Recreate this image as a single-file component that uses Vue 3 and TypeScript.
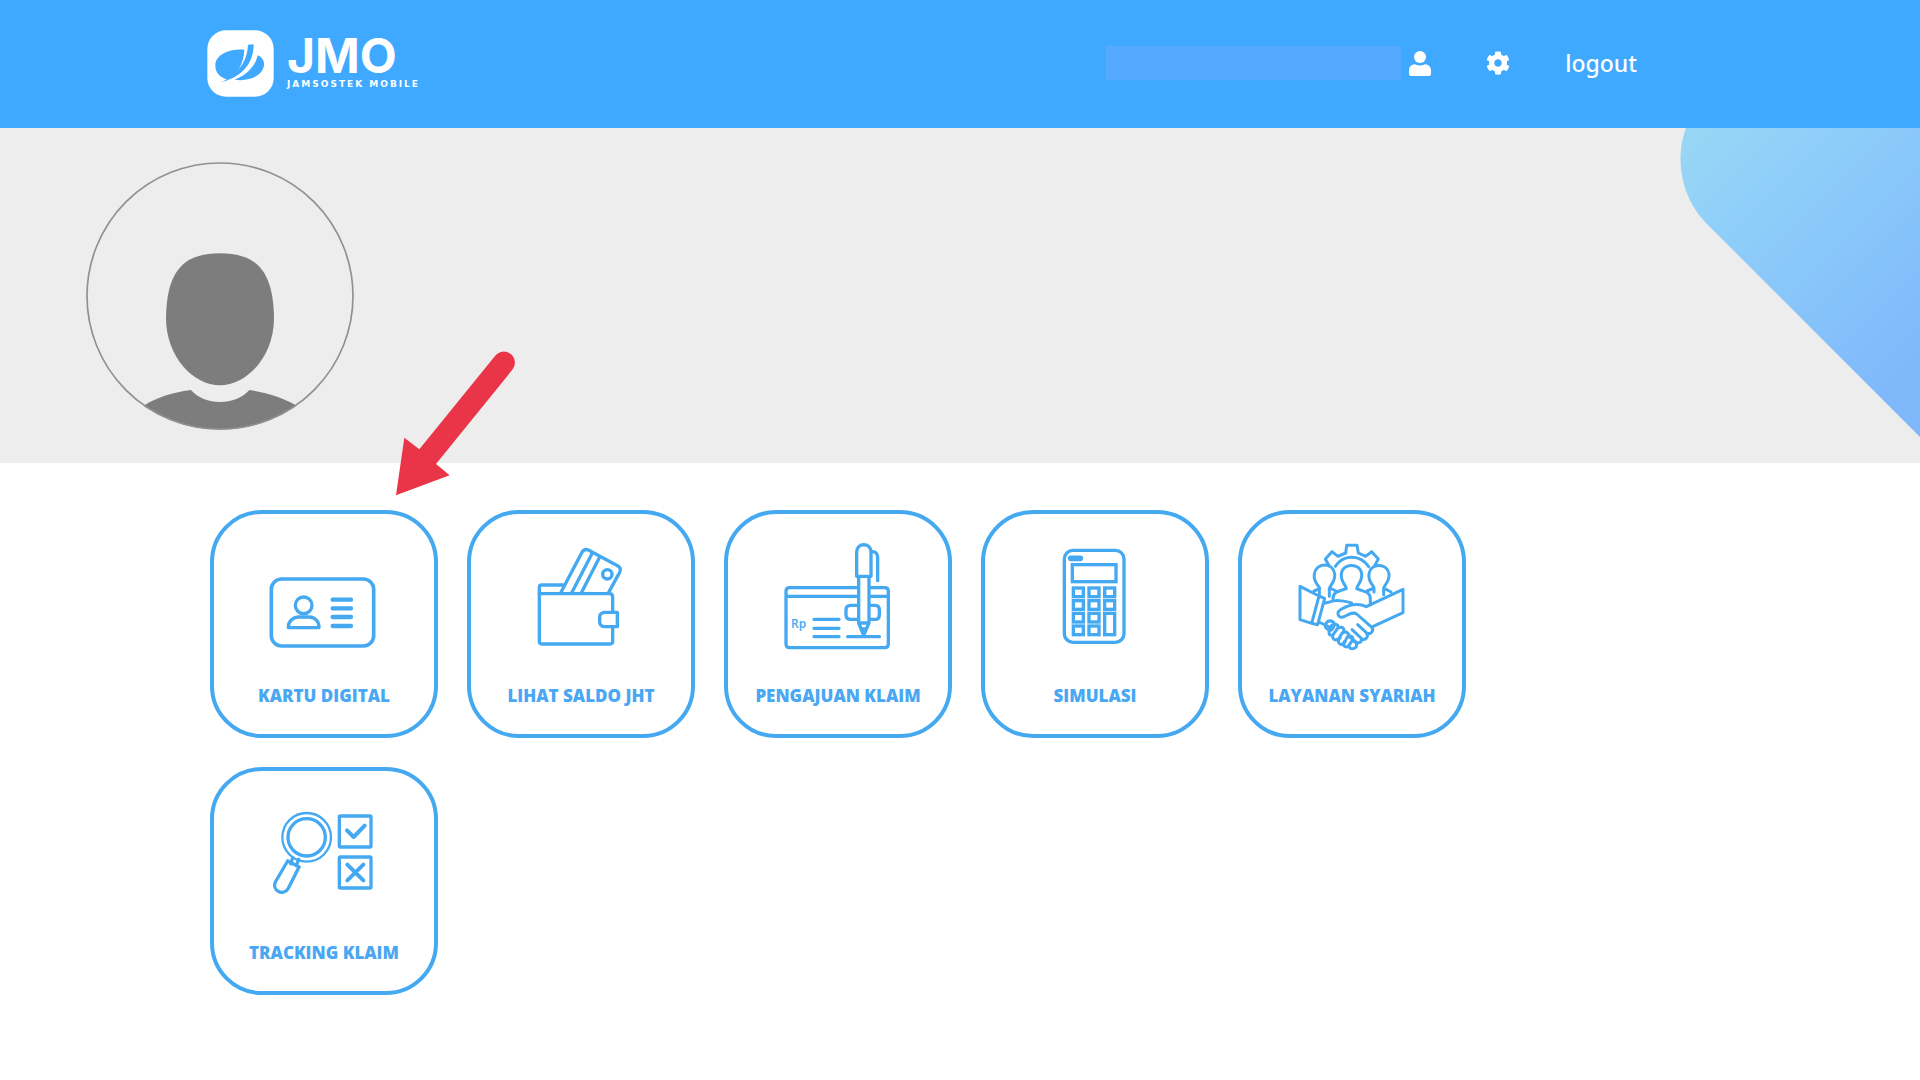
<script setup lang="ts">
interface MenuItem {
  id: string
  label: string
  viewBox: string
}

const menu: MenuItem[] = [
  { id: 'kartu', label: 'KARTU DIGITAL', viewBox: '193 121 360 360' },
  { id: 'saldo', label: 'LIHAT SALDO JHT', viewBox: '184 121 360 360' },
  { id: 'klaim', label: 'PENGAJUAN KLAIM', viewBox: '190 122 360 360' },
  { id: 'simulasi', label: 'SIMULASI', viewBox: '196 122 360 360' },
  { id: 'syariah', label: 'LAYANAN SYARIAH', viewBox: '187 120 360 360' },
  { id: 'tracking', label: 'TRACKING KLAIM', viewBox: '193 111 360 360' },
]

const keyColumns = [311, 358, 405]
const keyRows = [266, 304, 342, 380]
const calculatorKeys = keyRows.flatMap((y, row) =>
  keyColumns.filter((_, col) => row < 2 || col < 2).map((x) => ({ x, y })),
)
</script>

<template>
  <div class="page">
    <header class="topbar">
      <a class="brand" href="#" aria-label="JMO Jamsostek Mobile">
        <svg class="brand-mark" viewBox="51 60 201 201" aria-hidden="true">
          <rect x="52" y="61" width="199" height="199" rx="56" fill="#fff" />
          <path d="M163 119C120 116 77 133 76 165C75 187 91 204 113 208C139 196 161 165 163 119Z" fill="#3fa9ff" />
          <path d="M174 104L191 103C191 151 167 197 94 217C143 190 171 159 174 104Z" fill="#3fa9ff" />
          <path d="M203 136C216 142 223 151 222 165C219 196 178 216 134 209C169 196 196 169 203 136Z" fill="#3fa9ff" />
        </svg>
        <span class="brand-text">
          <span class="brand-name">JMO</span>
          <span class="brand-tagline">JAMSOSTEK MOBILE</span>
        </span>
      </a>
      <nav class="account">
        <a class="profile" href="#" aria-label="Profil">
          <span class="profile-name"></span>
          <svg class="user-icon" viewBox="0 0 22 25" aria-hidden="true">
            <circle cx="11" cy="6" r="6" fill="#fff" />
            <path d="M6 13.2C9 14.8 13 14.8 16 13.2C19.500 13.200 22 16 22 19V23Q22 25 20 25H2Q0 25 0 23V19C0 16 2.500 13.200 6 13.200Z" fill="#fff" />
          </svg>
        </a>
        <button class="icon-button" type="button" aria-label="Pengaturan">
          <svg class="gear-icon" viewBox="0 0 512 512" aria-hidden="true">
            <path fill="#fff" d="M487.400 315.700l-42.600-24.600c4.300-23.200 4.300-47 0-70.200l42.600-24.600c4.900-2.800 7.100-8.600 5.500-14-11.100-35.600-30-67.800-54.700-94.600-3.800-4.100-10-5.100-14.800-2.300L380.800 110c-17.900-15.400-38.500-27.300-60.800-35.100V25.800c0-5.600-3.900-10.500-9.400-11.700-36.700-8.200-74.300-7.800-109.200 0-5.500 1.200-9.400 6.100-9.400 11.700V75c-22.200 7.900-42.800 19.800-60.800 35.100L88.700 85.500c-4.900-2.800-11-1.900-14.800 2.300-24.700 26.700-43.600 58.900-54.700 94.600-1.700 5.400.6 11.200 5.500 14L67.300 221c-4.300 23.200-4.300 47 0 70.200l-42.600 24.600c-4.900 2.800-7.100 8.600-5.500 14 11.100 35.600 30 67.800 54.700 94.600 3.800 4.100 10 5.100 14.800 2.300l42.600-24.600c17.900 15.400 38.500 27.300 60.800 35.100v49.200c0 5.600 3.900 10.500 9.400 11.700 36.700 8.200 74.300 7.800 109.200 0 5.500-1.200 9.400-6.100 9.400-11.700v-49.200c22.200-7.900 42.800-19.800 60.800-35.100l42.600 24.600c4.900 2.800 11 1.900 14.800-2.300 24.700-26.700 43.600-58.900 54.700-94.600 1.500-5.500-.7-11.300-5.600-14.100zM256 336c-44.100 0-80-35.900-80-80s35.900-80 80-80 80 35.900 80 80-35.900 80-80 80z" />
          </svg>
        </button>
        <a class="logout" href="#">logout</a>
      </nav>
    </header>

    <section class="hero">
      <svg class="avatar" viewBox="79 66 804 804" role="img" aria-label="Foto profil">
        <defs>
          <clipPath id="avatar-clip"><circle cx="481" cy="468" r="401" /></clipPath>
        </defs>
        <path d="M481 340C585 340 641 386 643 534C643 650 561 736 481 736C401 736 319 650 319 534C321 386 377 340 481 340Z" fill="#7d7d7d" />
        <path clip-path="url(#avatar-clip)" d="M252 797C290 773 335 758 394 750C434 798 528 798 569 750C620 758 670 773 711 797V880H252Z" fill="#7d7d7d" />
        <circle cx="481" cy="468" r="399" fill="none" stroke="#909090" stroke-width="5" />
      </svg>
      <svg class="ornament" viewBox="0 0 240 335" aria-hidden="true">
        <defs>
          <linearGradient id="ornament-fill" gradientUnits="userSpaceOnUse" x1="10" y1="10" x2="240" y2="240">
            <stop offset="0" stop-color="#98d6f5" />
            <stop offset="0.25" stop-color="#90cff9" />
            <stop offset="1" stop-color="#7eb8fb" />
          </linearGradient>
        </defs>
        <path d="M6 0A92 92 0 0 0 28 97L240 309V0Z" fill="url(#ornament-fill)" />
      </svg>
      <svg class="pointer" viewBox="75 60 366 441" aria-hidden="true">
        <path d="M78 496L103 323L148 358L375 78A33 33 0 0 1 428 118L198 402L239 436Z" fill="#ea3447" />
      </svg>
    </section>

    <main class="menu">
      <a v-for="item in menu" :key="item.id" class="card" href="#">
        <svg class="card-icon" :viewBox="item.viewBox" aria-hidden="true">
          <g v-if="item.id === 'kartu'">
            <rect x="215" y="238" width="307" height="201" rx="31" stroke-width="11" />
            <circle cx="312" cy="317" r="25" />
            <path d="M266 384C265 364 281 353 295 352H329C346 353 359 365 358 384Z" />
            <path d="M399 300H454M399 326H454M399 352H454M399 379H454" stroke-width="13" />
          </g>
          <g v-else-if="item.id === 'saldo'">
            <path d="M459 332V292Q459 282 449 282H239V425Q239 433 247 433H451Q459 433 459 425V384" />
            <path d="M239 282V262Q239 256 247 256H311" />
            <path d="M304 278L367 158Q374 146 386 151L475 199Q486 206 480 218L447 278" />
            <path d="M337 278L398 160M366 278L420 172" />
            <circle cx="443" cy="224" r="14" />
            <path d="M473 338V381H433Q420 378 420 366V352Q420 341 433 338Z" />
          </g>
          <g v-else-if="item.id === 'klaim'">
            <path d="M428 265H225Q214 265 214 276V434Q214 445 225 445H510Q521 445 521 434V276Q521 265 510 265H467M214 291H428M467 291H521" />
            <path d="M430 231H426V158C426 129 469 129 469 158V231ZM432 235V371H463V235M432 371L447 408L463 371M442 389H453" />
            <path d="M472 157C484 156 489 164 489 176V244" />
            <path d="M428 318H408Q394 318 394 332V346Q394 360 408 360H428M467 318H482Q494 318 494 332V346Q494 360 482 360H467" />
            <path d="M298 360H373M298 387H373M298 412H373M399 412H494" />
            <text x="229" y="385">Rp</text>
          </g>
          <g v-else-if="item.id === 'simulasi'">
            <rect x="284" y="153" width="179" height="276" rx="26" />
            <path d="M303 177H332" stroke-width="17" />
            <rect x="308" y="196" width="131" height="51" class="sharp" />
            <rect v-for="key in calculatorKeys" :key="`${key.x}-${key.y}`" :x="key.x" :y="key.y" width="30" height="26" class="sharp" />
            <rect x="405" y="342" width="30" height="64" class="sharp" />
          </g>
          <g v-else-if="item.id === 'syariah'" class="fine">
            <path d="M298 197L287 177L307 155L325 169L348 159L351 136H382L386 159L408 169L426 155L446 177L435 197" />
            <path d="M317 199C339 165 390 160 417 200" />
            <path d="M253 273L270 266C267 255 250 246 254 221C259 188 308 185 315 221C318 245 302 254 300 264L319 273M299 264V289" />
            <path d="M269 264V283M310 298C309 276 323 275 350 266C349 255 332 246 335 221C340 188 391 188 396 221C399 245 382 255 381 266C404 276 423 274 422 298V315" />
            <path d="M412 273L433 264C431 254 414 245 418 221C423 188 472 188 478 221C481 245 464 254 462 264L484 276M433 264V276M462 264V284" />
            <path d="M268 288L211 259V359L246 370M268 288L285 295L264 374L246 370ZM280 311L300 306C319 297 342 302 366 309M267 366L294 378" />
            <path d="M429 380L520 338V268L410 320C386 309 361 313 336 327C316 337 326 358 343 350C356 344 370 334 381 342L424 380C436 390 423 407 410 398L384 374M410 398C419 412 405 424 394 414L367 389M394 414C399 425 389 432 379 426L361 412" />
            <path d="M291 386C279 375 295 357 309 365C322 372 307 395 297 391C300 367 335 369 323 386L310 405C292 410 297 388 308 382M323 386C339 376 350 388 337 400L328 415C314 426 302 413 314 399M337 400C352 390 363 402 351 414L344 430C333 440 318 426 332 413M351 414C363 402 374 411 367 423L356 438C346 445 337 436 344 425M367 423C380 421 386 437 376 444C363 451 353 440 361 431" />
          </g>
          <g v-else>
            <circle cx="321" cy="232" r="73" stroke-width="7" />
            <circle cx="321" cy="232" r="56" />
            <path d="M279 293L273 311M297 298L290 317M264 303L298 321" />
            <path d="M264 303L227 366C216 391 250 411 266 385L298 321" />
            <rect x="419" y="168" width="95" height="93" rx="3" />
            <rect x="419" y="291" width="95" height="93" rx="3" />
            <path d="M442 211L462 231L495 197M443 314L491 361M491 314L443 361" stroke-width="12" />
          </g>
        </svg>
        <span class="card-label">{{ item.label }}</span>
      </a>
    </main>
  </div>
</template>

<style>
body {
  margin: 0;
  background: #fff;
}
</style>

<style scoped>
.page {
  min-height: 100vh;
  background: #fff;
  font-family: 'Open Sans', 'Noto Sans', sans-serif;
}

.topbar {
  display: flex;
  align-items: center;
  justify-content: space-between;
  box-sizing: border-box;
  min-height: 128px;
  padding: 0 283px 2px 207px;
  background: #3fa9ff;
}

.brand {
  display: flex;
  align-items: center;
  gap: 13px;
  color: #fff;
  text-decoration: none;
}

.brand-mark {
  width: 67px;
  height: 67px;
}

.brand-text {
  display: flex;
  flex-direction: column;
  gap: 2px;
}

.brand-name {
  font-family: Inter, sans-serif;
  font-size: 48px;
  font-weight: 700;
  line-height: 40px;
}

.brand-tagline {
  font-family: 'DejaVu Sans', sans-serif;
  font-size: 9px;
  font-weight: 700;
  line-height: 12px;
  letter-spacing: 2px;
}

.account {
  display: flex;
  align-items: center;
  gap: 55px;
}

.profile {
  display: flex;
  align-items: center;
  gap: 8px;
}

.profile-name {
  width: 295px;
  height: 34px;
  background: #55a9ff;
}

.user-icon {
  width: 22px;
  height: 25px;
}

.icon-button {
  display: flex;
  padding: 0;
  border: 0;
  background: none;
  cursor: pointer;
}

.gear-icon {
  width: 24px;
  height: 24px;
}

.logout {
  color: #fff;
  font-family: 'Noto Sans', sans-serif;
  font-size: 23px;
  font-weight: 500;
  line-height: 32px;
  text-decoration: none;
}

.hero {
  position: relative;
  padding: 34px 86px 33px;
  background: #ededed;
}

.avatar {
  display: block;
  width: 268px;
  height: 268px;
}

.ornament {
  position: absolute;
  top: 0;
  right: 0;
  width: 240px;
  height: 335px;
}

.pointer {
  position: absolute;
  top: 222px;
  left: 395px;
  width: 122px;
  height: 147px;
}

.menu {
  display: flex;
  flex-wrap: wrap;
  gap: 29px;
  padding: 47px 210px;
}

.card {
  display: flex;
  flex-direction: column;
  align-items: center;
  gap: 24px;
  box-sizing: border-box;
  width: 228px;
  height: 228px;
  padding-top: 26px;
  border: 4px solid #45a9f2;
  border-radius: 52px;
  color: #4aa7f3;
  text-decoration: none;
}

.card-icon {
  width: 120px;
  height: 120px;
  fill: none;
  stroke: #45a9f2;
  stroke-width: 10;
  stroke-linecap: round;
  stroke-linejoin: round;
}

.card-icon .sharp {
  stroke-linejoin: miter;
}

.card-icon .fine {
  stroke-width: 9;
}

.card-icon text {
  fill: #45a9f2;
  stroke: none;
  font-size: 36px;
  font-weight: 600;
}

.card-label {
  font-size: 17px;
  font-weight: 800;
  line-height: 24px;
  white-space: nowrap;
}
</style>
